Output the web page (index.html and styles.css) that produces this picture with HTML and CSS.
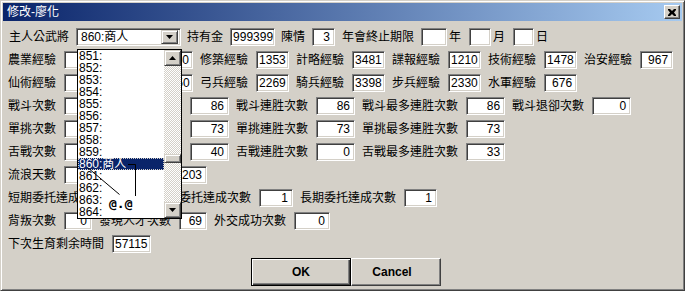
FILE: index.html
```html
<!DOCTYPE html>
<html lang="zh-Hant">
<head>
<meta charset="utf-8">
<title>修改-廖化</title>
<link rel="stylesheet" href="styles.css">
</head>
<body>
<div class="window">
  <div class="titlebar">
    <span class="title">修改-廖化</span>
    <span class="close"><svg width="8" height="7" viewBox="0 0 8 7"><path d="M0 0h2l2 2 2-2h2v1L6 3.5 8 6v1H6L4 5 2 7H0V6l2-2.5L0 1z" fill="#000"/></svg></span>
  </div>
  <div class="content">
    <div class="row r1">
      <span class="lbl first">主人公武將</span>
      <span class="combo"><span class="combo-text">860:商人</span><span class="dbtn"><svg width="7" height="4" viewBox="0 0 7 4"><path d="M0 0h7L3.5 4z" fill="#000"/></svg></span></span>
      <span class="lbl">持有金</span>
      <span class="f w45">999399</span>
      <span class="lbl">陳情</span>
      <span class="f w23">3</span>
      <span class="lbl wide">年會終止期限</span>
      <span class="f w26"></span>
      <span class="lbl unit">年</span>
      <span class="f w22"></span>
      <span class="lbl unit">月</span>
      <span class="f w21"></span>
      <span class="lbl unit">日</span>
    </div>
    <div class="row">
      <span class="lbl">農業經驗</span><span class="f w33"></span>
      <span class="lbl sp4"></span><span class="f w33">1150</span>
      <span class="lbl">修築經驗</span><span class="f w33">1353</span>
      <span class="lbl">計略經驗</span><span class="f w33">3481</span>
      <span class="lbl">諜報經驗</span><span class="f w33">1210</span>
      <span class="lbl">技術經驗</span><span class="f w33">1478</span>
      <span class="lbl">治安經驗</span><span class="f w33">967</span>
    </div>
    <div class="row">
      <span class="lbl">仙術經驗</span><span class="f w33"></span>
      <span class="lbl sp4"></span><span class="f w33">1050</span>
      <span class="lbl">弓兵經驗</span><span class="f w33">2269</span>
      <span class="lbl">騎兵經驗</span><span class="f w33">3398</span>
      <span class="lbl">步兵經驗</span><span class="f w33">2330</span>
      <span class="lbl">水軍經驗</span><span class="f w33">676</span>
    </div>
    <div class="row">
      <span class="lbl">戰斗次數</span><span class="f w39"></span>
      <span class="lbl">戰斗胜利次數</span><span class="f w39">86</span>
      <span class="lbl">戰斗連胜次數</span><span class="f w39">86</span>
      <span class="lbl">戰斗最多連胜次數</span><span class="f w39">86</span>
      <span class="lbl">戰斗退卻次數</span><span class="f w39">0</span>
    </div>
    <div class="row">
      <span class="lbl">單挑次數</span><span class="f w39"></span>
      <span class="lbl">單挑胜利次數</span><span class="f w39">73</span>
      <span class="lbl">單挑連胜次數</span><span class="f w39">73</span>
      <span class="lbl">單挑最多連胜次數</span><span class="f w39">73</span>
    </div>
    <div class="row">
      <span class="lbl">舌戰次數</span><span class="f w39"></span>
      <span class="lbl">舌戰胜利次數</span><span class="f w39">40</span>
      <span class="lbl">舌戰連胜次數</span><span class="f w39">0</span>
      <span class="lbl">舌戰最多連胜次數</span><span class="f w39">33</span>
    </div>
    <div class="row">
      <span class="lbl">流浪天數</span><span class="f w143">203</span>
    </div>
    <div class="row">
      <span class="lbl">短期委托達成次數</span><span class="f w36"></span>
      <span class="lbl">中期委托達成次數</span><span class="f w34">1</span>
      <span class="lbl">長期委托達成次數</span><span class="f w33">1</span>
    </div>
    <div class="row">
      <span class="lbl">背叛次數</span><span class="f w28">0</span>
      <span class="lbl">發現人才次數</span><span class="f w28">69</span>
      <span class="lbl">外交成功次數</span><span class="f w36">0</span>
    </div>
    <div class="row">
      <span class="lbl">下次生育剩余時間</span><span class="f w39">57115</span>
    </div>
    <div class="buttons">
      <span class="btn default">OK</span>
      <span class="btn cancel">Cancel</span>
    </div>
  </div>

  <div class="droplist">
    <div class="items">
      <div class="item">851:</div>
      <div class="item">852:</div>
      <div class="item">853:</div>
      <div class="item">854:</div>
      <div class="item">855:</div>
      <div class="item">856:</div>
      <div class="item">857:</div>
      <div class="item">858:</div>
      <div class="item">859:</div>
      <div class="item sel">860:商人</div>
      <div class="item">861:</div>
      <div class="item">862:</div>
      <div class="item">863:</div>
      <div class="item">864:</div>
    </div>
    <div class="vscroll">
      <span class="sbtn"><svg width="7" height="4" viewBox="0 0 7 4"><path d="M3.5 0L7 4H0z" fill="#000"/></svg></span>
      <span class="track"><span class="thumb"></span></span>
      <span class="sbtn"><svg width="7" height="4" viewBox="0 0 7 4"><path d="M0 0h7L3.5 4z" fill="#000"/></svg></span>
    </div>
  </div>

  <svg class="doodle" width="685" height="291" viewBox="0 0 685 291">
    <path d="M86.5 166.5L118.5 193.5" stroke="#000" stroke-width="1" fill="none"/>
    <path d="M127 163.5H134.5V195" stroke="#000" stroke-width="1" fill="none"/>
  </svg>
  <span class="doodle-text">@.@</span>
</div>
</body>
</html>
```

FILE: styles.css
```css
* { box-sizing: border-box; }
html, body { margin: 0; padding: 0; }
body {
  width: 685px;
  height: 291px;
  overflow: hidden;
  background: #d4d0c8;
  font-family: "Liberation Sans", "Noto Sans CJK TC", sans-serif;
  font-size: 12px;
  color: #000;
}
.window {
  position: relative;
  width: 685px;
  height: 291px;
  background: #d4d0c8;
  border: 1px solid;
  border-color: #d4d0c8 #404040 #404040 #d4d0c8;
  box-shadow: inset 1px 1px #fff, inset -1px -1px #808080;
  padding: 2px;
}
.titlebar {
  height: 18px;
  display: flex;
  align-items: center;
  justify-content: space-between;
  background: linear-gradient(to right, #0a246a, #a6caf0);
}
.title {
  color: #fff;
  padding-left: 4px;
  line-height: 18px;
}
.close {
  width: 16px;
  height: 14px;
  margin-right: 2px;
  display: flex;
  align-items: center;
  justify-content: center;
  background: #d4d0c8;
  border: 1px solid;
  border-color: #fff #404040 #404040 #fff;
  box-shadow: inset -1px -1px #808080;
}
.content {
  padding: 7px 0 0 5px;
}
.row {
  display: flex;
  align-items: center;
  gap: 7px;
  height: 18px;
  margin-bottom: 5px;
}
.lbl {
  white-space: nowrap;
  line-height: 18px;
  margin-right: 1px;
}
.sp4 { width: 48px; height: 18px; flex: none; }
.r1 { gap: 6px; }
.r1 .first { margin-left: 1px; }
.r1 .wide { margin-left: 1px; }
.r1 .unit { margin-left: -4px; margin-right: 2px; }
.f {
  flex: none;
  height: 18px;
  background: #fff;
  border: 1px solid;
  border-color: #808080 #fff #fff #808080;
  box-shadow: inset 1px 1px #404040, inset -1px -1px #d4d0c8;
  text-align: right;
  padding: 0 4px 0 2px;
  line-height: 16px;
  white-space: nowrap;
  overflow: hidden;
}
.w21 { width: 21px; }
.w22 { width: 22px; }
.w23 { width: 23px; }
.w26 { width: 26px; }
.w28 { width: 28px; }
.w33 { width: 33px; }
.w34 { width: 34px; }
.w36 { width: 36px; }
.w39 { width: 39px; }
.w45 { width: 45px; }
.w143 { width: 143px; }

.combo {
  flex: none;
  width: 105px;
  height: 18px;
  display: flex;
  align-items: center;
  justify-content: space-between;
  background: #fff;
  border: 1px solid;
  border-color: #808080 #fff #fff #808080;
  box-shadow: inset 1px 1px #404040, inset -1px -1px #d4d0c8;
  padding: 2px;
}
.combo-text { padding-left: 2px; line-height: 14px; }
.dbtn, .sbtn {
  flex: none;
  display: flex;
  align-items: center;
  justify-content: center;
  background: #d4d0c8;
  border: 1px solid;
  border-color: #d4d0c8 #404040 #404040 #d4d0c8;
  box-shadow: inset 1px 1px #fff, inset -1px -1px #808080;
}
.dbtn { width: 17px; height: 14px; }

.buttons {
  display: flex;
  padding-left: 243px;
  margin-top: 0;
}
.btn {
  height: 28px;
  display: flex;
  align-items: center;
  justify-content: center;
  font-weight: bold;
  background: #d4d0c8;
  border: 1px solid;
  border-color: #fff #404040 #404040 #fff;
  box-shadow: inset -1px -1px #808080;
}
.btn.default {
  width: 100px;
  border: 1px solid #000;
  box-shadow: inset 1px 1px #fff, inset -1px -1px #404040, inset -2px -2px #808080;
}
.btn.cancel { width: 90px; padding-right: 8px; }

.droplist {
  position: absolute;
  left: 76px;
  top: 48px;
  width: 105px;
  height: 170px;
  display: flex;
  background: #fff;
  border: 1px solid #000;
}
.items { flex: 1; }
.item {
  height: 12px;
  line-height: 12px;
  padding-left: 1px;
  white-space: nowrap;
}
.item.sel {
  background: #0a246a;
  color: #fff;
  outline: 1px dotted #d4d0c8;
  outline-offset: -1px;
}
.vscroll {
  width: 17px;
  display: flex;
  flex-direction: column;
}
.sbtn { width: 17px; height: 16px; }
.track {
  flex: 1;
  background: repeating-conic-gradient(#d4d0c8 0 25%, #fff 0 50%) 0 0 / 2px 2px;
}
.thumb {
  display: block;
  height: 9px;
  margin-top: 88px;
  background: #d4d0c8;
  border: 1px solid;
  border-color: #d4d0c8 #404040 #404040 #d4d0c8;
  box-shadow: inset 1px 1px #fff, inset -1px -1px #808080;
}
.doodle {
  position: absolute;
  left: 0;
  top: 0;
  pointer-events: none;
}
.doodle-text {
  position: absolute;
  left: 108px;
  top: 196px;
  font-family: "DejaVu Sans Mono", monospace;
  font-size: 13px;
  line-height: 14px;
  font-weight: bold;
}
```
